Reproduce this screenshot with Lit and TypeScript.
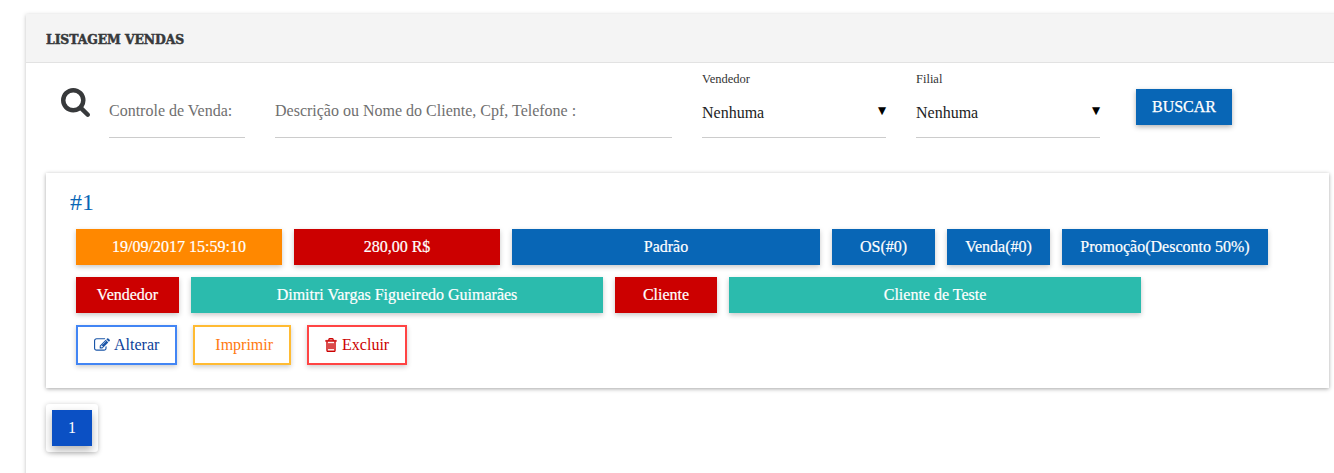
import { LitElement, html, css } from "lit";
import { customElement } from "lit/decorators.js";

@customElement("app-root")
export class AppRoot extends LitElement {
  static styles = css`
    :host { display: block; width: 1334px; height: 473px; overflow: hidden; background: #fff; font-family: "Liberation Serif", "Times New Roman", serif; font-size: 16px; }
    * { box-sizing: border-box; }
    .panel { margin: 14px 0 0 26px; width: 1340px; height: 480px; background: #fff; box-shadow: 0 1px 4px rgba(0,0,0,.25); }
    .head { height: 49px; background: #f4f4f4; border-bottom: 1px solid #e2e2e2; padding: 18px 0 0 20px; font-family: "DejaVu Serif", serif; font-weight: 700; font-size: 12.4px; line-height: 16px; color: #37393b; letter-spacing: -0.08px; -webkit-text-stroke: 0.5px #37393b; }
    .search { display: flex; height: 110px; padding-left: 35px; align-items: flex-start; }
    .icon { width: 29px; height: 29px; margin: 25px 19px 0 0; fill: #37393b; flex: none; }
    .field { margin: 27px 30px 0 0; }
    .input { display: block; height: 48px; padding: 0 0 6px; border: 0; border-bottom: 1px solid #ccc; outline: 0; background: none; font: inherit; color: #333; }
    .input::placeholder { color: #6f6f6f; opacity: 1; }
    .w-code { width: 136px; }
    .w-desc { width: 397px; }
    .sel { margin-top: 8px; width: 184px; }
    .label { font-size: 12.5px; line-height: 14px; padding-top: 1px; height: 15px; color: #333; }
    .select { height: 50px; margin-top: 2px; padding-top: 13px; border-bottom: 1px solid #ccc; display: flex; justify-content: space-between; color: #222; line-height: 24px; }
    .arrow { font-family: "DejaVu Sans", sans-serif; font-size: 10.5px; line-height: 18px; color: #000; }
    .buscar { margin: 26px 0 0 6px; width: 96px; height: 36px; border: 0; padding: 0; background: #0866b6; color: #fff; font: inherit; -webkit-text-stroke: 0.25px #fff; box-shadow: 0 2px 5px rgba(0,0,0,.3); }
    .card { margin-left: 20px; width: 1283px; height: 215px; padding: 12px 0 0 30px; background: #fff; box-shadow: 0 1px 4px rgba(0,0,0,.35); }
    .num { margin: 0 0 0 -6px; height: 44px; font-size: 24px; font-weight: 400; line-height: 34px; color: #0866b6; }
    .row { display: flex; gap: 12px; margin-bottom: 12px; }
    .chip { height: 36px; line-height: 36px; text-align: center; color: #fff; -webkit-text-stroke: 0.2px #fff; box-shadow: 0 2px 5px rgba(0,0,0,.22); flex: none; }
    .c1 { width: 103px; } .c1s { width: 102px; } .c2 { width: 206px; } .c3 { width: 308px; } .c4 { width: 412px; }
    .orange { background: #ff8800; } .red { background: #cc0000; } .blue { background: #0866b6; } .teal { background: #2bbbad; }
    .actions { display: flex; gap: 16px; }
    .btn { height: 40px; display: flex; align-items: center; gap: 4px; padding: 0 16px; border: 2px solid; background: #fff; font: inherit; box-shadow: 0 2px 5px rgba(0,0,0,.2); }
    .btn svg { flex: none; }
    .edit { border-color: #4285f4; color: #0d3f9a; fill: #1a56a8; }
    .print { border-color: #ffbb33; color: #ff7a10; padding-left: 20px; }
    .del { border-color: #ff4444; color: #cc0000; fill: #cc0000; stroke: #cc0000; stroke-width: 50px; gap: 5px; }
    .pager { margin: 16px 0 0 20px; width: 52px; height: 48px; padding: 6px; background: #fff; border-radius: 3px; box-shadow: 0 1px 5px rgba(0,0,0,.25); }
    .page { width: 40px; height: 36px; line-height: 36px; text-align: center; color: #fff; background: #0b50c4; box-shadow: 0 4px 8px rgba(0,0,0,.3); }
  `;

  render() {
    return html`
      <section class="panel">
        <div class="head">LISTAGEM VENDAS</div>
        <div class="search">
          <svg class="icon" viewBox="0 0 1664 1664"><path d="M1152 704q0-185-131.500-316.500t-316.500-131.500-316.500 131.500-131.500 316.500 131.500 316.500 316.500 131.500 316.500-131.500 131.500-316.500zm512 832q0 52-38 90t-90 38q-54 0-90-38l-343-342q-179 124-399 124-143 0-273.500-55.500t-225-150-150-225-55.500-273.500 55.500-273.500 150-225 225-150 273.500-55.500 273.500 55.500 225 150 150 225 55.500 273.500q0 220-124 399l343 343q37 37 37 90z"/></svg>
          <div class="field"><input class="input w-code" placeholder="Controle de Venda:" /></div>
          <div class="field"><input class="input w-desc" placeholder="Descrição ou Nome do Cliente, Cpf, Telefone :" /></div>
          <div class="field sel"><div class="label">Vendedor</div><div class="select"><span>Nenhuma</span><span class="arrow">▼</span></div></div>
          <div class="field sel"><div class="label">Filial</div><div class="select"><span>Nenhuma</span><span class="arrow">▼</span></div></div>
          <button class="buscar">BUSCAR</button>
        </div>
        <article class="card">
          <h2 class="num">#1</h2>
          <div class="row">
            <div class="chip c2 orange">19/09/2017 15:59:10</div>
            <div class="chip c2 red">280,00 R$</div>
            <div class="chip c3 blue">Padrão</div>
            <div class="chip c1 blue">OS(#0)</div>
            <div class="chip c1 blue">Venda(#0)</div>
            <div class="chip c2 blue">Promoção(Desconto 50%)</div>
          </div>
          <div class="row">
            <div class="chip c1 red">Vendedor</div>
            <div class="chip c4 teal">Dimitri Vargas Figueiredo Guimarães</div>
            <div class="chip c1s red">Cliente</div>
            <div class="chip c4 teal">Cliente de Teste</div>
          </div>
          <div class="actions">
            <button class="btn edit"><svg width="16" height="16" viewBox="0 0 1792 1792"><path d="M888 1184l116-116-152-152-116 116v56h96v96h56zm440-720q-16-16-33 1l-350 350q-17 17-1 33t33-1l350-350q17-17 1-33zm80 594v190q0 119-84.500 203.500t-203.500 84.500h-832q-119 0-203.500-84.500t-84.500-203.500v-832q0-119 84.500-203.500t203.500-84.500h832q63 0 117 25 15 7 18 23 3 17-9 29l-49 49q-14 14-32 8-23-6-45-6h-832q-66 0-113 47t-47 113v832q0 66 47 113t113 47h832q66 0 113-47t47-113v-126q0-13 9-22l64-64q15-15 35-7t20 29zm-96-738l288 288-672 672h-288v-288zm444 132l-92 92-288-288 92-92q28-28 68-28t68 28l152 152q28 28 28 68t-28 68z"/></svg>Alterar</button>
            <button class="btn print">Imprimir</button>
            <button class="btn del"><svg width="12" height="14" viewBox="128 128 1536 1536" preserveAspectRatio="none"><path d="M704 736v576q0 14-9 23t-23 9h-64q-14 0-23-9t-9-23v-576q0-14 9-23t23-9h64q14 0 23 9t9 23zm256 0v576q0 14-9 23t-23 9h-64q-14 0-23-9t-9-23v-576q0-14 9-23t23-9h64q14 0 23 9t9 23zm256 0v576q0 14-9 23t-23 9h-64q-14 0-23-9t-9-23v-576q0-14 9-23t23-9h64q14 0 23 9t9 23zm128 724v-948h-896v948q0 22 7 40.500t14.500 27 10.500 8.500h832q3 0 10.500-8.500t14.500-27 7-40.500zm-672-1076h448l-48-117q-7-9-17-11h-317q-10 2-17 11zm928 32v64q0 14-9 23t-23 9h-96v948q0 83-47 143.500t-113 60.500h-832q-66 0-113-61.500t-47-145.500v-945h-96q-14 0-23-9t-9-23v-64q0-14 9-23t23-9h309l70-167q15-37 54-63t79-26h320q40 0 79 26t54 63l70 167h309q14 0 23 9t9 23z"/></svg>Excluir</button>
          </div>
        </article>
        <nav class="pager"><div class="page">1</div></nav>
      </section>
    `;
  }
}
